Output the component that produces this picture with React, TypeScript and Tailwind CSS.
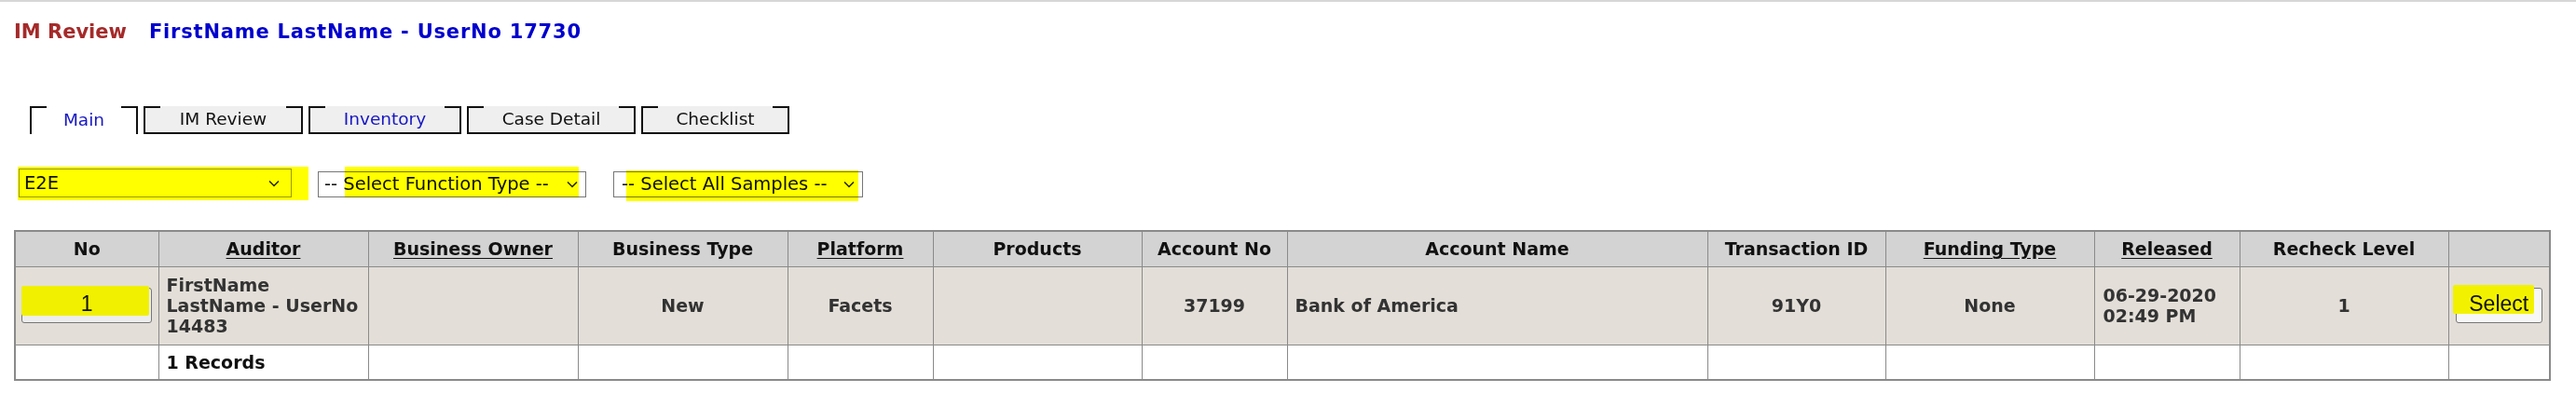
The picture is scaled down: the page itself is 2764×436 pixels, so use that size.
import clsx from "clsx";

const tabs = [
  { label: "Main", w: "w-[116px]", active: true, blue: true },
  { label: "IM Review", w: "w-[171px]", active: false, blue: false },
  { label: "Inventory", w: "w-[164px]", active: false, blue: true },
  { label: "Case Detail", w: "w-[181px]", active: false, blue: false },
  { label: "Checklist", w: "w-[159px]", active: false, blue: false },
];

function Tab({ label, w, active, blue }: { label: string; w: string; active: boolean; blue: boolean }) {
  return (
    <div
      className={clsx(
        "relative h-[30px] flex items-center justify-center border-x-2 border-[#111] text-[18.5px]",
        w,
        active ? "bg-white" : "bg-[#efefef] border-b-2",
        blue ? "text-[#1616c4]" : "text-[#111]"
      )}
    >
      <span className="absolute left-0 top-0 w-[16px] h-[2px] bg-[#111]" />
      <span className="absolute right-0 top-0 w-[16px] h-[2px] bg-[#111]" />
      {label}
    </div>
  );
}

function Chevron() {
  return (
    <svg width="12" height="8" viewBox="0 0 12 8" className="shrink-0">
      <path d="M1 1.5 L6 6.5 L11 1.5" fill="none" stroke="#222" strokeWidth="1.5" />
    </svg>
  );
}

function Th({ children, u }: { children?: React.ReactNode; u?: boolean }) {
  return (
    <th className="border border-[#8a8a8a] text-center font-bold text-[#111] px-1">
      {u ? <span className="underline underline-offset-[3px]">{children}</span> : children}
    </th>
  );
}

const cell = "border border-[#8a8a8a] align-middle";

export default function App() {
  return (
    <div className="min-h-screen bg-white font-['DejaVu_Sans',Verdana,sans-serif]">
      <div className="h-[2px] bg-[#d6d6d6]" />

      {/* title */}
      <div className="pl-[15px] pt-[20px] flex gap-[24px] text-[21px] font-bold leading-[25px]">
        <span className="text-[#a52a2a]">IM Review</span>
        <span className="text-[#0000cd] tracking-[0.8px]">FirstName LastName - UserNo 17730</span>
      </div>

      {/* tabs */}
      <div className="mt-[67px] pl-[32px] flex gap-[6px]">
        {tabs.map((t) => (
          <Tab key={t.label} {...t} />
        ))}
      </div>

      {/* filters */}
      <div className="mt-[37px] pl-[20px] flex items-start text-[19.5px] text-[#111]">
        <div className="relative w-[293px] h-[31px] border border-[#9a9a9a] flex items-center justify-between pl-[5px] pr-[12px]">
          <span className="absolute -left-[2px] -top-[3px] w-[312px] h-[36px] bg-[#ffff00] mix-blend-multiply" />
          <span>E2E</span>
          <Chevron />
        </div>
        <div className="relative ml-[28px] mt-[3px] w-[288px] h-[28px] border border-[#767676] flex items-center justify-between pl-[6px] pr-[8px]">
          <span className="absolute left-[28px] -top-[6px] w-[251px] h-[33px] bg-[#ffff00] mix-blend-multiply" />
          <span>-- Select Function Type --</span>
          <Chevron />
        </div>
        <div className="relative ml-[29px] mt-[3px] w-[268px] h-[28px] border border-[#767676] flex items-center justify-between pl-[8px] pr-[8px]">
          <span className="absolute left-[13px] -top-[2px] w-[249px] h-[33px] bg-[#ffff00] mix-blend-multiply" />
          <span>-- Select All Samples --</span>
          <Chevron />
        </div>
      </div>

      {/* grid */}
      <table className="mt-[35px] ml-[15px] w-[2720px] table-fixed border-collapse border-2 border-[#8a8a8a] text-[19px] font-bold leading-[22px]">
        <colgroup>
          <col className="w-[154px]" />
          <col className="w-[225px]" />
          <col className="w-[225px]" />
          <col className="w-[225px]" />
          <col className="w-[156px]" />
          <col className="w-[224px]" />
          <col className="w-[156px]" />
          <col className="w-[451px]" />
          <col className="w-[191px]" />
          <col className="w-[224px]" />
          <col className="w-[156px]" />
          <col className="w-[224px]" />
          <col className="w-[109px]" />
        </colgroup>
        <thead>
          <tr className="h-[38px] bg-[#d3d3d3]">
            <Th>No</Th>
            <Th u>Auditor</Th>
            <Th u>Business Owner</Th>
            <Th>Business Type</Th>
            <Th u>Platform</Th>
            <Th>Products</Th>
            <Th>Account No</Th>
            <Th>Account Name</Th>
            <Th>Transaction ID</Th>
            <Th u>Funding Type</Th>
            <Th u>Released</Th>
            <Th>Recheck Level</Th>
            <Th />
          </tr>
        </thead>
        <tbody>
          <tr className="h-[84px] bg-[#e3dfd8] text-[#333]">
            <td className={cell}>
              <div className="relative mx-auto w-[140px] h-[38px] rounded-[3px] border border-[#767676] bg-[#ededed] flex items-start justify-center pt-[3px] font-['Liberation_Sans',Arial,sans-serif] font-normal text-[23px] leading-[26px] text-[#111]">
                <span className="absolute -left-px -top-[3px] w-[137px] h-[32px] bg-[#f0f000] rounded-[2px]" />
                <span className="relative">1</span>
              </div>
            </td>
            <td className={clsx(cell, "pl-[8px] pr-[4px] text-left")}>FirstName LastName - UserNo 14483</td>
            <td className={cell} />
            <td className={clsx(cell, "text-center")}>New</td>
            <td className={clsx(cell, "text-center")}>Facets</td>
            <td className={cell} />
            <td className={clsx(cell, "text-center")}>37199</td>
            <td className={clsx(cell, "pl-[8px] text-left")}>Bank of America</td>
            <td className={clsx(cell, "text-center")}>91Y0</td>
            <td className={clsx(cell, "text-center")}>None</td>
            <td className={clsx(cell, "pl-[9px] pr-[6px] text-left")}>06-29-2020 02:49 PM</td>
            <td className={clsx(cell, "text-center")}>1</td>
            <td className={cell}>
              <div className="relative mx-auto w-[93px] h-[38px] rounded-[3px] border border-[#767676] bg-[#f7f7f7] flex items-center justify-center font-['Liberation_Sans',Arial,sans-serif] font-normal text-[23px] text-[#111]">
                <span className="absolute -left-[4px] -top-[4px] w-[87px] h-[31px] bg-[#f2f200] rounded-[2px]" />
                <span className="relative -mt-[4px]">Select</span>
              </div>
            </td>
          </tr>
          <tr className="h-[38px] bg-white text-[#111]">
            <td className={cell} />
            <td className={clsx(cell, "pl-[8px] text-left")}>1 Records</td>
            <td className={cell} />
            <td className={cell} />
            <td className={cell} />
            <td className={cell} />
            <td className={cell} />
            <td className={cell} />
            <td className={cell} />
            <td className={cell} />
            <td className={cell} />
            <td className={cell} />
            <td className={cell} />
          </tr>
        </tbody>
      </table>
    </div>
  );
}
